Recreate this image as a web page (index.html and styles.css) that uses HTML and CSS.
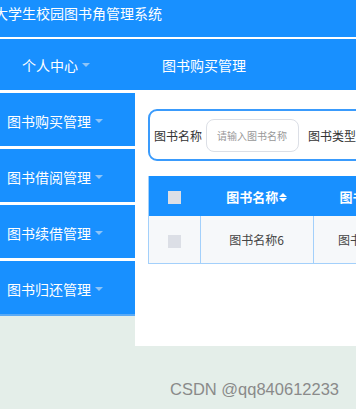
FILE: index.html
```html
<!DOCTYPE html>
<html lang="zh">
<head>
    <meta charset="UTF-8">
    <meta name="viewport" content="width=device-width, initial-scale=1.0">
    <title>大学生校园图书角管理系统</title>
    <link rel="stylesheet" href="styles.css">
</head>
<body>
    <div class="header">
        <span class="title">大学生校园图书角管理系统</span>
    </div>
    <div class="nav">
        <div class="nav-user">个人中心<span class="caret"></span></div>
        <div class="nav-current">图书购买管理</div>
    </div>
    <div class="main">
        <ul class="menu">
            <li>图书购买管理<span class="caret"></span></li>
            <li>图书借阅管理<span class="caret"></span></li>
            <li>图书续借管理<span class="caret"></span></li>
            <li>图书归还管理<span class="caret"></span></li>
        </ul>
        <div class="content">
            <form class="search">
                <label for="book_name">图书名称</label>
                <input type="text" id="book_name" placeholder="请输入图书名称">
                <label>图书类型</label>
            </form>
            <table class="list">
                <thead>
                    <tr>
                        <th class="col-check"><span class="box"></span></th>
                        <th class="col-name">图书名称<span class="sort"><i class="up"></i><i class="down"></i></span></th>
                        <th class="col-type">图书类型</th>
                    </tr>
                </thead>
                <tbody>
                    <tr>
                        <td class="col-check"><span class="box"></span></td>
                        <td class="col-name">图书名称6</td>
                        <td class="col-type">图书类型6</td>
                    </tr>
                </tbody>
            </table>
        </div>
    </div>
    <div class="watermark">CSDN @qq840612233</div>
</body>
</html>
```

FILE: styles.css
```css
body {
    font-family: "Noto Sans CJK SC", "Noto Sans", sans-serif;
    background-color: #e4eee9;
    margin: 0;
    padding: 0;
    width: 356px;
    height: 409px;
    overflow: hidden;
    position: relative;
}

.header {
    height: 37px;
    background-color: #1890ff;
    border-bottom: 2px solid #fff;
    color: #fff;
    font-size: 14px;
    line-height: 26px;
    white-space: nowrap;
}

.title {
    margin-left: -6px;
}

.nav {
    height: 51px;
    background-color: #1890ff;
    border-bottom: 3px solid #fff;
    display: flex;
    align-items: center;
    color: #fff;
    font-size: 14px;
}

.nav-user {
    width: 113px;
    padding-left: 22px;
}

.nav-current {
    padding-left: 27px;
    white-space: nowrap;
}

.caret {
    display: inline-block;
    margin-left: 4px;
    vertical-align: middle;
    border-left: 4px solid transparent;
    border-right: 4px solid transparent;
    border-top: 4px solid #8ec4f7;
    position: relative;
    top: -2px;
}

.main {
    display: flex;
    align-items: flex-start;
}

.menu {
    list-style: none;
    margin: 0;
    padding: 0;
    width: 135px;
    flex-shrink: 0;
    border-bottom: 2px solid #5aaaf5;
}

.menu li {
    height: 53px;
    line-height: 56px;
    background-color: #1890ff;
    color: #fff;
    font-size: 14px;
    padding-left: 7px;
    border-top: 3px solid #fff;
}

.menu li:first-child {
    border-top: none;
}

.content {
    flex: 1;
    background-color: #fff;
    height: 255px;
    margin-top: -2px;
    overflow: hidden;
    padding: 18px 0 0 13px;
    box-sizing: border-box;
}

.search {
    width: 320px;
    height: 52px;
    border: 2px solid #3a9bfc;
    border-radius: 9px;
    box-sizing: border-box;
    display: flex;
    align-items: center;
    padding-left: 4px;
    white-space: nowrap;
    font-size: 12px;
    color: #333;
}

.search input {
    width: 93px;
    height: 33px;
    box-sizing: border-box;
    margin: 0 9px 0 4px;
    border: 1px solid #dcdfe6;
    border-radius: 8px;
    padding: 0 10px;
    font-family: inherit;
    font-size: 10px;
}

.search input::placeholder {
    color: #999;
}

.list {
    margin-top: 15px;
    border-collapse: collapse;
    width: 270px;
    table-layout: fixed;
    font-size: 12px;
    white-space: nowrap;
    border-left: 1px solid #a3d0fb;
}

.list th {
    height: 40px;
    padding: 0;
    background-color: #1890ff;
    color: #fff;
    font-size: 13px;
    font-weight: bold;
}

.list td {
    height: 47px;
    padding: 0;
    background-color: #f6f8fa;
    color: #444;
    text-align: center;
    border-right: 1px solid #a3d0fb;
    border-bottom: 1px solid #a3d0fb;
}

.col-check {
    width: 51px;
}

.col-name {
    width: 113px;
}

.col-type {
    width: 104px;
}

.box {
    display: inline-block;
    width: 13px;
    height: 13px;
    background-color: #dcdfe6;
    vertical-align: middle;
}

.sort {
    display: inline-block;
    vertical-align: middle;
    margin-left: 1px;
    width: 8px;
}

.sort i {
    display: block;
    border-left: 4px solid transparent;
    border-right: 4px solid transparent;
}

.sort .up {
    border-bottom: 4px solid #fff;
    margin-bottom: 1px;
}

.sort .down {
    border-top: 4px solid #fff;
}

.watermark {
    position: absolute;
    left: 170px;
    top: 380px;
    font-family: "Liberation Sans", Arial, sans-serif;
    font-size: 16.5px;
    color: #8a8a8a;
}
```
